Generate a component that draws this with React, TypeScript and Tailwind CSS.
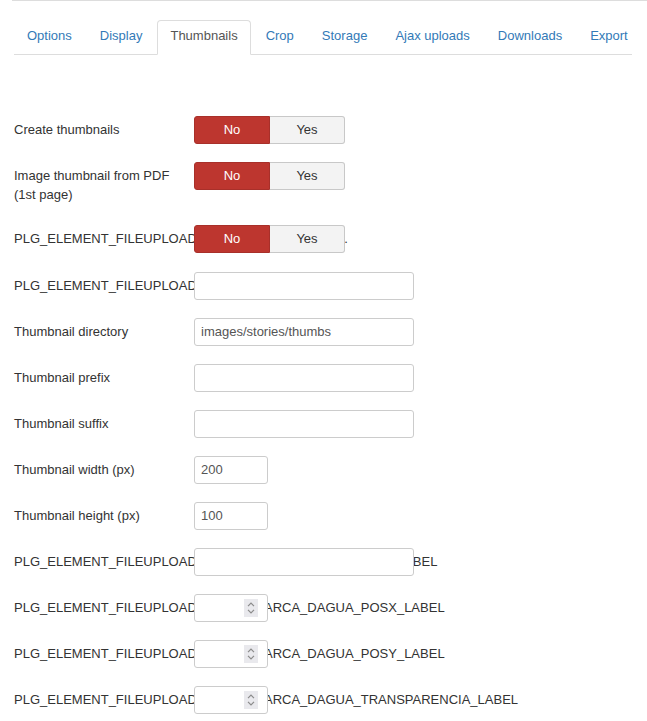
import React from 'react';

const tabs = ['Options', 'Display', 'Thumbnails', 'Crop', 'Storage', 'Ajax uploads', 'Downloads', 'Export'];

function Toggle() {
  return (
    <div className="flex h-[28px] w-[151px] shrink-0">
      <span className="flex flex-1 items-center justify-center rounded-l-[3px] border border-[#a8302a] bg-[#bd362f] text-white">No</span>
      <span className="flex flex-1 items-center justify-center rounded-r-[3px] border border-l-0 border-[#c8c8c8] bg-[#f3f3f3] text-[#333]">Yes</span>
    </div>
  );
}

function TextInput({ value = '', wide = true }: { value?: string; wide?: boolean }) {
  return (
    <div
      className={`relative flex h-[28px] shrink-0 items-center rounded-[3px] border border-[#ccc] bg-white px-[6px] text-[#555] ${
        wide ? 'w-[220px]' : 'w-[74px]'
      }`}
    >
      {value}
    </div>
  );
}

function NumberInput() {
  return (
    <div className="relative flex h-[28px] w-[74px] shrink-0 items-center rounded-[3px] border border-[#ccc] bg-white">
      <span className="absolute right-[9px] top-[4px] flex h-[18px] w-[14px] flex-col items-center justify-center gap-[2px] bg-[#e9e9ed]">
        <svg width="8" height="5" viewBox="0 0 8 5" fill="none" stroke="#8a8a8a" strokeWidth="1.2">
          <path d="M1 4.2 L4 1.2 L7 4.2" />
        </svg>
        <svg width="8" height="5" viewBox="0 0 8 5" fill="none" stroke="#8a8a8a" strokeWidth="1.2">
          <path d="M1 0.8 L4 3.8 L7 0.8" />
        </svg>
      </span>
    </div>
  );
}

function Row({ label, children, gap = 'mb-[18px]' }: { label: string; children: React.ReactNode; gap?: string }) {
  return (
    <div className={`flex items-start ${gap}`}>
      <div className="mr-[20px] w-[160px] shrink-0 pt-[4px] pb-[3px] leading-[19px] text-[#333]">{label}</div>
      {children}
    </div>
  );
}

export default function App() {
  return (
    <div className="min-h-screen bg-white pl-3 font-['Liberation_Sans',Arial,sans-serif] text-[13px] text-[#333]">
      <div className="border-t border-[#ddd]">
        <ul className="ml-[2px] mr-[15px] mt-[19px] flex border-b border-[#ddd]">
          {tabs.map((t) =>
            t === 'Thumbnails' ? (
              <li
                key={t}
                className="-mb-px mr-[2px] h-[35px] whitespace-nowrap rounded-t-[4px] border border-[#ddd] border-b-white bg-white px-3 pt-[6px] leading-[18px] text-[#555]"
              >
                {t}
              </li>
            ) : (
              <li
                key={t}
                className="-mb-px mr-[2px] h-[35px] whitespace-nowrap border border-transparent px-3 pt-[6px] leading-[18px] text-[#337ab7]"
              >
                {t}
              </li>
            )
          )}
        </ul>

        <div className="mt-[61px] pl-[2px]">
          <Row label="Create thumbnails">
            <Toggle />
          </Row>
          <Row label="Image thumbnail from PDF (1st page)">
            <Toggle />
          </Row>
          <Row label="PLG_ELEMENT_FILEUPLOAD_THUMB_ZOOM_LABEL." gap="mb-[19px]">
            <Toggle />
          </Row>
          <Row label="PLG_ELEMENT_FILEUPLOAD_IMAGE_MARCA_DAGUA_LABEL">
            <TextInput />
          </Row>
          <Row label="Thumbnail directory">
            <TextInput value="images/stories/thumbs" />
          </Row>
          <Row label="Thumbnail prefix">
            <TextInput />
          </Row>
          <Row label="Thumbnail suffix">
            <TextInput />
          </Row>
          <Row label="Thumbnail width (px)">
            <TextInput value="200" wide={false} />
          </Row>
          <Row label="Thumbnail height (px)">
            <TextInput value="100" wide={false} />
          </Row>
          <Row label="PLG_ELEMENT_FILEUPLOAD_IMAGE_MARCA_DAGUA_SIZE_LABEL">
            <TextInput />
          </Row>
          <Row label="PLG_ELEMENT_FILEUPLOAD_IMAGE_MARCA_DAGUA_POSX_LABEL">
            <NumberInput />
          </Row>
          <Row label="PLG_ELEMENT_FILEUPLOAD_IMAGE_MARCA_DAGUA_POSY_LABEL">
            <NumberInput />
          </Row>
          <Row label="PLG_ELEMENT_FILEUPLOAD_IMAGE_MARCA_DAGUA_TRANSPARENCIA_LABEL" gap="">
            <NumberInput />
          </Row>
        </div>
      </div>
    </div>
  );
}
